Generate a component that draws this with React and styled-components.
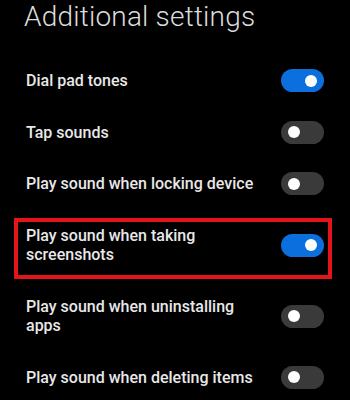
import React, { useState } from "react";
import styled, { createGlobalStyle } from "styled-components";

const settingsData = [
    { id: 1, label: "Dial pad tones", on: true },
    { id: 2, label: "Tap sounds", on: false },
    { id: 3, label: "Play sound when locking device", on: false },
    { id: 4, label: "Play sound when taking screenshots", on: true, highlighted: true },
    { id: 5, label: "Play sound when uninstalling apps", on: false },
    { id: 6, label: "Play sound when deleting items", on: false },
];

const GlobalStyle = createGlobalStyle`
    html, body {
        margin: 0;
        padding: 0;
        background: #000;
    }
    body {
        font-family: Roboto, "Liberation Sans", sans-serif;
        overflow: hidden;
    }
`;

const Page = styled.div`
    width: 350px;
    height: 400px;
    background: #000;
    overflow: hidden;
`;

const Title = styled.h1`
    margin: 0;
    padding: 0 0 0 24px;
    font-size: 28px;
    font-weight: 300;
    line-height: 34px;
    color: #dcdcdc;
    letter-spacing: 0.2px;
`;

const List = styled.div`
    display: flex;
    flex-direction: column;
    padding: 21px 26px 0 26px;
`;

const Row = styled.div`
    position: relative;
    display: flex;
    align-items: center;
    justify-content: space-between;
    gap: 20px;
    padding: 16px 0;

    &::after {
        content: "";
        display: ${(props) => (props.highlighted ? "block" : "none")};
        position: absolute;
        top: 8px;
        bottom: 2px;
        left: -12px;
        right: -8px;
        border: 4px solid #e5141b;
        pointer-events: none;
    }
`;

const Label = styled.div`
    flex: 1;
    max-width: 240px;
    font-size: 16px;
    font-weight: 500;
    line-height: 19.5px;
    color: #e8e8e8;
`;

const Track = styled.button`
    flex: 0 0 auto;
    position: relative;
    width: 43px;
    height: 23px;
    margin: -2px 0;
    padding: 0;
    border: none;
    border-radius: 12px;
    background: ${(props) => (props.on ? "#0b6fde" : "#3a3a3a")};
    cursor: pointer;
`;

const Knob = styled.span`
    position: absolute;
    top: 5.5px;
    left: ${(props) => (props.on ? "24px" : "7px")};
    width: 12px;
    height: 12px;
    border-radius: 50%;
    background: #fff;
`;

export default function App() {
    const [toggles, setToggles] = useState(settingsData.map((s) => s.on));

    const handleToggle = (index) => {
        const next = [...toggles];
        next[index] = !next[index];
        setToggles(next);
    };

    return (
        <Page>
            <GlobalStyle />
            <Title>Additional settings</Title>
            <List>
                {settingsData.map((item, index) => (
                    <Row key={item.id} highlighted={item.highlighted ? 1 : 0}>
                        <Label>{item.label}</Label>
                        <Track
                            on={toggles[index] ? 1 : 0}
                            onClick={() => handleToggle(index)}
                        >
                            <Knob on={toggles[index] ? 1 : 0} />
                        </Track>
                    </Row>
                ))}
            </List>
        </Page>
    );
}
